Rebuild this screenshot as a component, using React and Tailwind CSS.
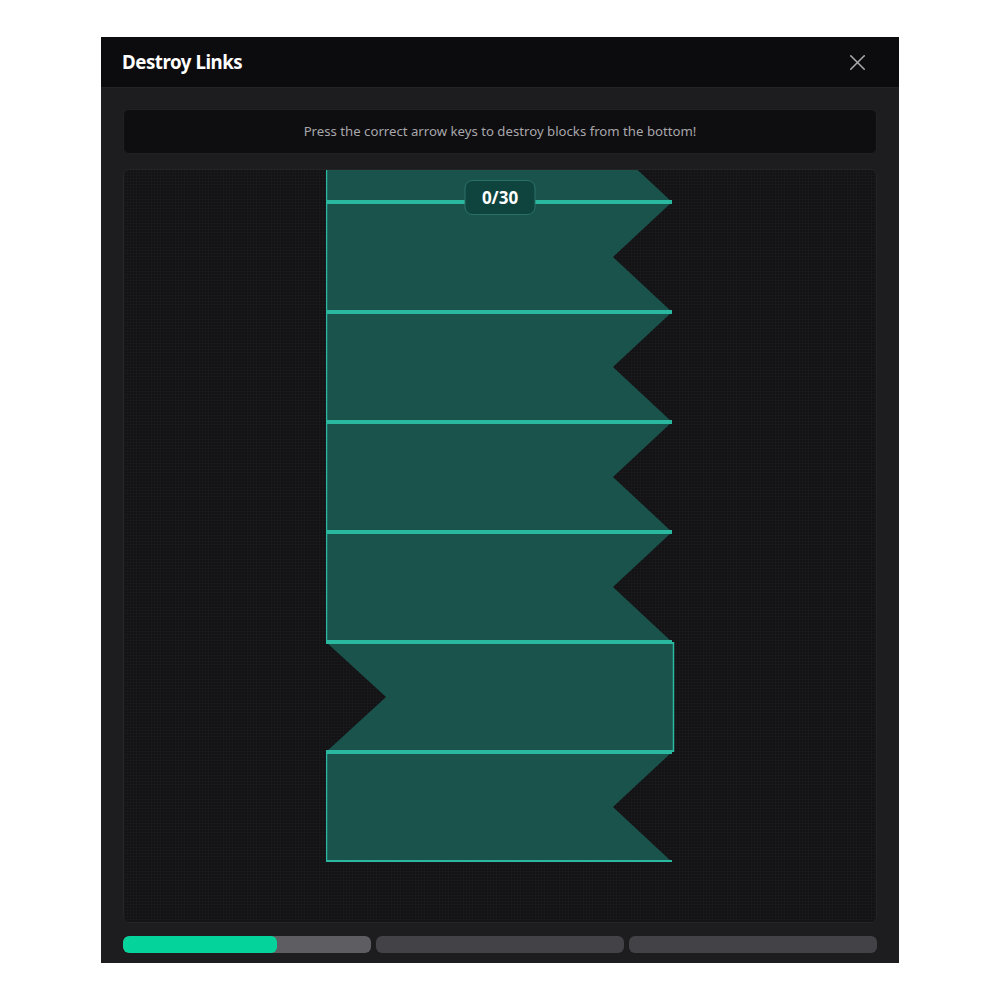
import { X } from "lucide-react";

// which side of each link has the arrow notch, top to bottom
const links = ["right", "right", "right", "right", "right", "left", "right"];

const Block = ({ side }) => {
  const fill = "#1a524c";
  const edge = "#2bb8a1";
  if (side === "left") {
    return (
      <svg width="350" height="110" viewBox="0 0 350 110" className="block shrink-0">
        <polygon points="0,0 348,0 348,110 0,110 60,55" fill={fill} />
        <line x1="0" y1="1" x2="348" y2="1" stroke={edge} strokeWidth="2" />
        <line x1="0" y1="109" x2="348" y2="109" stroke={edge} strokeWidth="2" />
        <line x1="347.5" y1="0" x2="347.5" y2="110" stroke={edge} strokeWidth="1.5" />
      </svg>
    );
  }
  return (
    <svg width="350" height="110" viewBox="0 0 350 110" className="block shrink-0">
      <polygon points="0,0 346,0 287,55 346,110 0,110" fill={fill} />
      <line x1="0" y1="1" x2="346" y2="1" stroke={edge} strokeWidth="2" />
      <line x1="0" y1="109" x2="346" y2="109" stroke={edge} strokeWidth="2" />
      <line x1="0.5" y1="0" x2="0.5" y2="110" stroke={edge} strokeWidth="1.5" />
    </svg>
  );
};

const Progress = ({ value }) => (
  <div className="flex-1 h-[17px] rounded-md bg-[#434246] overflow-hidden">
    <div className="h-full rounded-md bg-[#5e5d61]" style={{ width: value === null ? "0%" : "100%" }}>
      {value !== null && (
        <div className="h-full rounded-md bg-[#04d39c]" style={{ width: `${value}%` }} />
      )}
    </div>
  </div>
);

export default function App() {
  return (
    <div className="min-h-screen bg-white pt-[37px] font-['Noto_Sans',sans-serif]">
      <div className="mx-auto w-[798px] rounded-t-sm bg-[#1d1c1f]">
        <div className="flex items-center justify-between h-[51px] pl-[21px] pr-[28px] bg-[#0c0b0e] border-b border-[#242326]">
          <h1 className="text-white font-bold text-[18.7px] tracking-tight">Destroy Links</h1>
          <X className="text-[#a9a8ac] w-[27px] h-[27px]" strokeWidth={1.4} />
        </div>

        <div className="px-[22px] pt-[21px] pb-[10px] flex flex-col">
          <div className="h-[45px] rounded-md bg-[#0e0d10] border border-[#212023] flex items-center justify-center text-[13.2px] text-[#a8a7ab]">
            Press the correct arrow keys to destroy blocks from the bottom!
          </div>

          <div className="relative mt-[15px] h-[754px] rounded-md border border-[#252427] bg-[#131215] bg-[linear-gradient(90deg,rgba(255,255,255,0.015)_1px,transparent_1px),linear-gradient(0deg,rgba(255,255,255,0.015)_1px,transparent_1px)] bg-[size:3px_3px] overflow-hidden flex flex-col items-center justify-end pb-[60px]">
            <div className="flex flex-col items-center pl-[2px]">
              {links.map((side, i) => (
                <Block key={i} side={side} />
              ))}
            </div>
            <div className="absolute top-[10px] left-1/2 -translate-x-1/2 w-[71px] h-[35px] rounded-lg bg-[#0f433e] border border-[#2a7269] flex items-center justify-center text-white font-bold text-[17px]">
              0/30
            </div>
          </div>

          <div className="mt-[13px] flex gap-[5px]">
            <Progress value={62} />
            <Progress value={null} />
            <Progress value={null} />
          </div>
        </div>
      </div>
    </div>
  );
}
